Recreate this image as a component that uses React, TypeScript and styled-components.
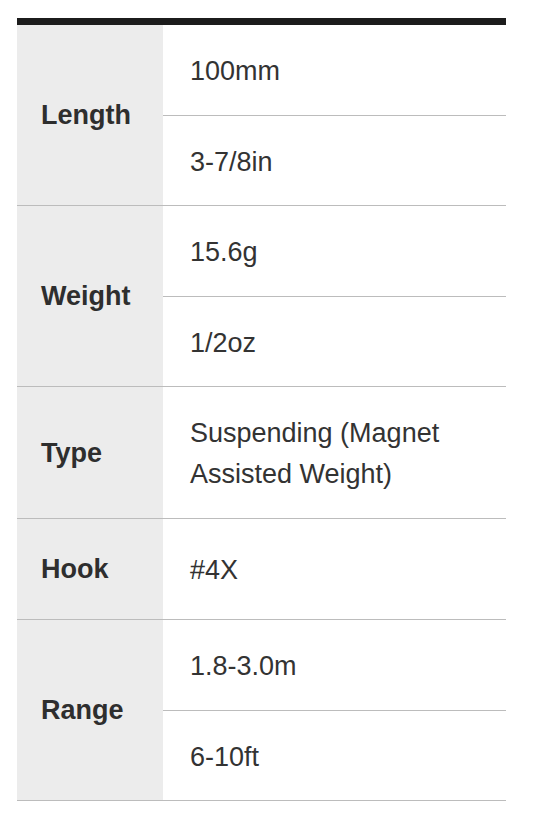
import React from "react";
import styled, { createGlobalStyle } from "styled-components";

const Global = createGlobalStyle`
  html, body { margin: 0; padding: 0; background: #ffffff; }
  body { font-family: "Liberation Sans", Arial, sans-serif; color: #333333; }
`;

const Page = styled.div`
  padding: 18px 27px 15px 17px;
`;

const Table = styled.div`
  width: 489px;
  border-top: 7px solid #1c1c1c;
  display: flex;
  flex-direction: column;
`;

const Group = styled.div`
  display: grid;
  grid-template-columns: 146px 1fr;
  border-bottom: 1px solid #bcbcbc;
`;

const Label = styled.div`
  background: #ececec;
  display: flex;
  align-items: center;
  padding: 30px 8px 29px 24px;
  font-size: 27px;
  line-height: 41px;
  font-weight: 700;
  color: #2e2e2e;
`;

const Values = styled.div`
  display: flex;
  flex-direction: column;
`;

const Value = styled.div<{ $last?: boolean }>`
  flex: 1;
  display: flex;
  align-items: center;
  padding: 26px 16px 23px 27px;
  font-size: 27px;
  line-height: 41px;
  color: #333333;
  border-bottom: ${(p) => (p.$last ? "none" : "1px solid #bcbcbc")};
  &:not(:first-child):last-child {
    padding-bottom: 22px;
  }
`;

const specs: { label: string; values: string[] }[] = [
  { label: "Length", values: ["100mm", "3-7/8in"] },
  { label: "Weight", values: ["15.6g", "1/2oz"] },
  { label: "Type", values: ["Suspending (Magnet Assisted Weight)"] },
  { label: "Hook", values: ["#4X"] },
  { label: "Range", values: ["1.8-3.0m", "6-10ft"] },
];

export default function App() {
  return (
    <>
      <Global />
      <Page>
        <Table>
          {specs.map((s) => (
            <Group key={s.label}>
              <Label>{s.label}</Label>
              <Values>
                {s.values.map((v, i) => (
                  <Value key={v} $last={i === s.values.length - 1}>
                    {v}
                  </Value>
                ))}
              </Values>
            </Group>
          ))}
        </Table>
      </Page>
    </>
  );
}
